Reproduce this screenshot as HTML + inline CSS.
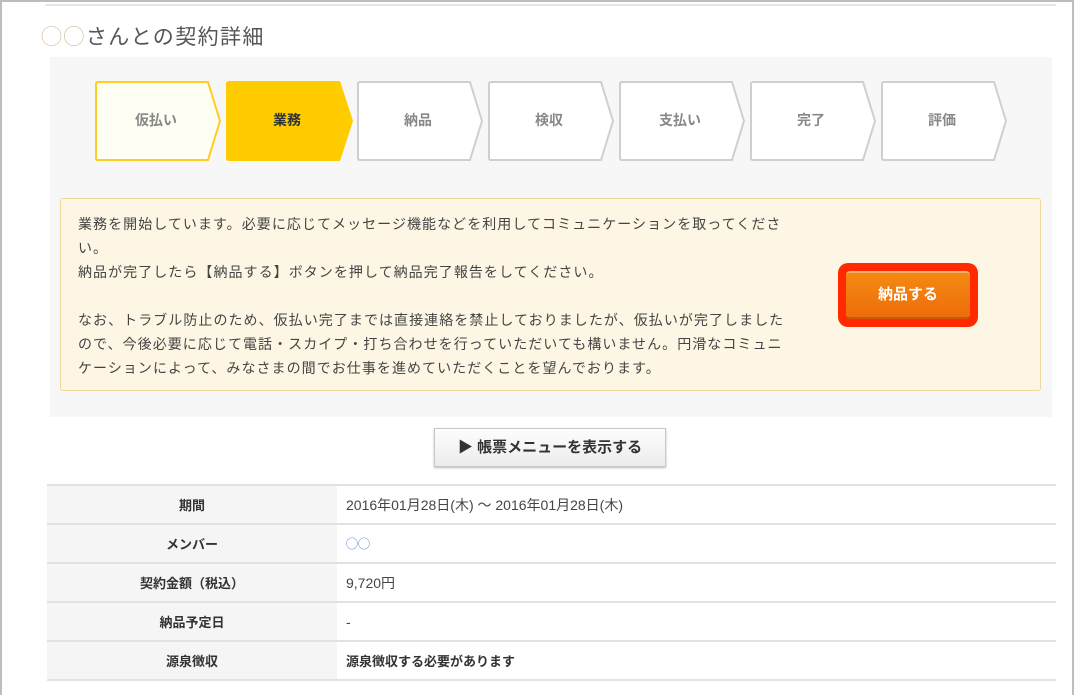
<!DOCTYPE html>
<html><head><meta charset="utf-8"><style>
*{margin:0;padding:0;box-sizing:border-box}
body{width:1076px;height:695px;background:#fff;font-family:"Liberation Sans","Noto Sans CJK JP",sans-serif;position:relative;overflow:hidden;color:#333}
.frame{position:absolute;left:0;top:0;width:1074px;height:695px;border:2px solid #bdbdbd;border-bottom:none}
.topline{position:absolute;left:45px;top:4px;width:1011px;height:2px;background:#e6e6e6}
h1{position:absolute;left:41px;top:21px;font-size:21px;font-weight:normal;color:#555;letter-spacing:1.4px}
.panel{position:absolute;left:50px;top:57px;width:1002px;height:360px;background:#f7f7f7}
.step{position:absolute;top:81px;width:131px;height:80px}
.step svg{position:absolute;left:0;top:0}
.step span{position:absolute;left:0;width:124px;top:29px;text-align:center;font-size:14px;font-weight:bold;color:#888}
.notice{position:absolute;left:60px;top:198px;width:981px;height:193px;background:#fdf6e5;border:1px solid #ebd99b;border-radius:3px}
.notice p{position:absolute;left:17px;top:13px;font-size:14px;line-height:24px;color:#444;letter-spacing:1.05px;white-space:nowrap}
.redbox{position:absolute;left:838px;top:263px;width:140px;height:64px;background:#ff2a00;border-radius:10px}
.btn{position:absolute;left:846px;top:271px;width:124px;height:48px;border-radius:4px;background:linear-gradient(#f48a12,#ee6c0c);border-top:2px solid #f7b070;border-bottom:2px solid #c85a08;color:#fff;font-weight:bold;font-size:15px;text-align:center;line-height:44px}
.menu{position:absolute;left:434px;top:428px;width:232px;height:39px;border:1px solid #c8c8c8;background:linear-gradient(#fdfdfd,#ececec);box-shadow:0 1px 2px #bbb;font-size:15px;font-weight:bold;color:#333;text-align:center;line-height:37px}
table{position:absolute;left:47px;top:484px;width:1009px;border-collapse:collapse;font-size:14px}
td{height:39px;border-top:2px solid #e2e2e2;border-bottom:2px solid #e2e2e2;color:#444}
td.l{width:290px;background:#f5f5f5;text-align:center;font-weight:bold;color:#333;font-size:13px}
td.v{padding-left:9px}
</style></head><body>
<div class="frame"></div>
<div class="topline"></div>
<h1><span style="color:#d9c2a8">◯◯</span>さんとの契約詳細</h1>
<div class="panel"></div>

<div class="step" style="left:94px"><svg width="131" height="80"><path d="M2 3 Q2 1 4 1 H114 L126 40 L114 79 H4 Q2 79 2 77 Z" fill="#fffef3" stroke="#ffcd1f" stroke-width="2"/></svg><span>仮払い</span></div>
<div class="step" style="left:225px"><svg width="131" height="80"><path d="M1 3 Q1 0 4 0 H115 L128 40 L115 80 H4 Q1 80 1 77 Z" fill="#ffcc00"/></svg><span style="color:#333">業務</span></div>
<div class="step" style="left:356px"><svg width="131" height="80"><path d="M2 3 Q2 1 4 1 H114 L126 40 L114 79 H4 Q2 79 2 77 Z" fill="#fff" stroke="#cfcfcf" stroke-width="2"/></svg><span>納品</span></div>
<div class="step" style="left:487px"><svg width="131" height="80"><path d="M2 3 Q2 1 4 1 H114 L126 40 L114 79 H4 Q2 79 2 77 Z" fill="#fff" stroke="#cfcfcf" stroke-width="2"/></svg><span>検収</span></div>
<div class="step" style="left:618px"><svg width="131" height="80"><path d="M2 3 Q2 1 4 1 H114 L126 40 L114 79 H4 Q2 79 2 77 Z" fill="#fff" stroke="#cfcfcf" stroke-width="2"/></svg><span>支払い</span></div>
<div class="step" style="left:749px"><svg width="131" height="80"><path d="M2 3 Q2 1 4 1 H114 L126 40 L114 79 H4 Q2 79 2 77 Z" fill="#fff" stroke="#cfcfcf" stroke-width="2"/></svg><span>完了</span></div>
<div class="step" style="left:880px"><svg width="131" height="80"><path d="M2 3 Q2 1 4 1 H114 L126 40 L114 79 H4 Q2 79 2 77 Z" fill="#fff" stroke="#cfcfcf" stroke-width="2"/></svg><span>評価</span></div>

<div class="notice"><p>業務を開始しています。必要に応じてメッセージ機能などを利用してコミュニケーションを取ってくださ<br>い。<br>納品が完了したら【納品する】ボタンを押して納品完了報告をしてください。<br><br>なお、トラブル防止のため、仮払い完了までは直接連絡を禁止しておりましたが、仮払いが完了しました<br>ので、今後必要に応じて電話・スカイプ・打ち合わせを行っていただいても構いません。円滑なコミュニ<br>ケーションによって、みなさまの間でお仕事を進めていただくことを望んでおります。</p></div>
<div class="redbox"></div>
<div class="btn">納品する</div>

<div class="menu">▶ 帳票メニューを表示する</div>

<table>
<tr><td class="l">期間</td><td class="v">2016年01月28日(木) ～ 2016年01月28日(木)</td></tr>
<tr><td class="l">メンバー</td><td class="v" style="color:#2a6fd6;font-size:12px">◯◯</td></tr>
<tr><td class="l">契約金額（税込）</td><td class="v">9,720円</td></tr>
<tr><td class="l">納品予定日</td><td class="v">-</td></tr>
<tr><td class="l">源泉徴収</td><td class="v" style="font-weight:bold;color:#333;font-size:13px">源泉徴収する必要があります</td></tr>
</table>
</body></html>
